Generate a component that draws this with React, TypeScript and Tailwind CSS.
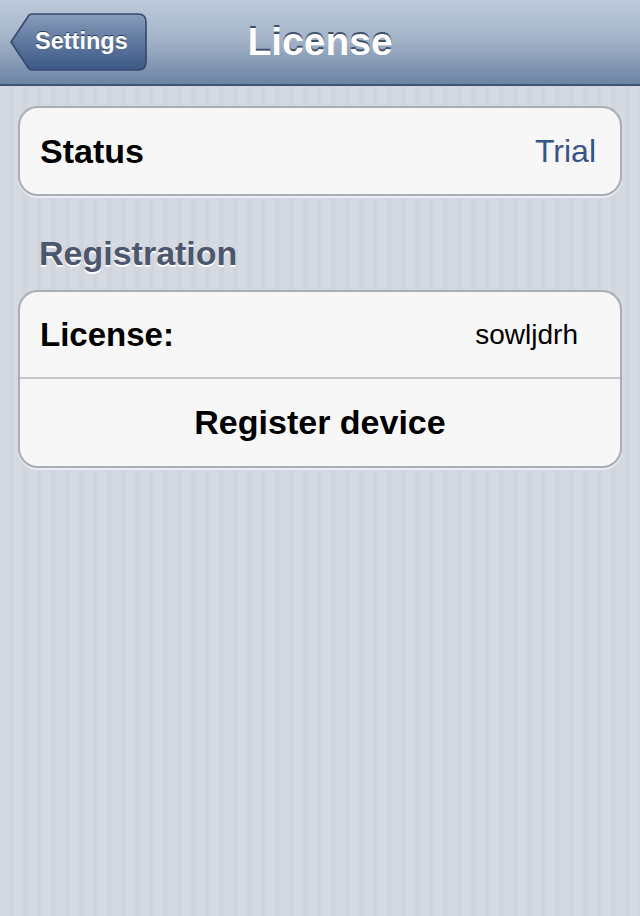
import React from "react";

const font = { fontFamily: '"Liberation Sans", Arial, sans-serif' };

export default function App() {
  return (
    <div
      className="w-[640px] h-[916px] flex flex-col overflow-hidden"
      style={font}
    >
      {/* Nav bar */}
      <div className="relative h-[86px] shrink-0 bg-[linear-gradient(to_bottom,#bccadb_0%,#a5b4c9_45%,#6c84a5_100%)] border-b-2 border-[#3f5373] flex items-center justify-center">
        <div className="absolute left-[10px] top-[13px] h-[58px] w-[137px]">
          <svg width="137" height="58" viewBox="0 0 137 58" className="absolute inset-0">
            <defs>
              <linearGradient id="bb" x1="0" y1="0" x2="0" y2="1">
                <stop offset="0" stopColor="#8a9dbb" />
                <stop offset="0.5" stopColor="#5e789f" />
                <stop offset="1" stopColor="#3b5887" />
              </linearGradient>
            </defs>
            <path
              d="M1 29 L19 2 Q20 1 23 1 L128 1 Q136 1 136 9 L136 49 Q136 57 128 57 L23 57 Q20 57 19 56 Z"
              fill="url(#bb)"
              stroke="#33486b"
              strokeWidth="1.6"
            />
          </svg>
          <span className="absolute left-[25px] top-0 h-[58px] flex items-center text-[23.5px] font-bold text-white [text-shadow:0_-1px_0_#2b3d5c]">
            Settings
          </span>
        </div>
        <span className="text-[39px] font-bold text-white leading-none [text-shadow:0_-2px_0_#3f4f6b] -mt-[1px]">
          License
        </span>
      </div>

      {/* Body */}
      <div className="flex-1 bg-[repeating-linear-gradient(to_right,#d5d9e2_0px,#d5d9e2_9px,#cfd4dd_9px,#cfd4dd_14px)] px-[18px] pt-[20px] flex flex-col">
        <div className="h-[90px] rounded-[20px] bg-[#f7f7f7] border-2 border-[#a9adb5] shadow-[0_2px_0_#e9ecf1] flex items-center justify-between pl-[20px] pr-[24px]">
          <span className="text-[34px] font-bold text-black">Status</span>
          <span className="text-[32px] text-[#385487]">Trial</span>
        </div>

        <div className="h-[94px] flex items-end pb-[17px] pl-[21px]">
          <span className="text-[34px] leading-[40px] font-bold text-[#4c566c] [text-shadow:0_2px_0_#ffffff]">
            Registration
          </span>
        </div>

        <div className="rounded-[20px] bg-[#f7f7f7] border-2 border-[#a9adb5] shadow-[0_2px_0_#e9ecf1] flex flex-col overflow-hidden">
          <div className="h-[87px] flex items-center justify-between pl-[20px] pr-[42px] border-b-2 border-[#c8c8c8]">
            <span className="text-[33px] font-bold text-black">License:</span>
            <span className="text-[28px] text-black">sowljdrh</span>
          </div>
          <div className="h-[87px] flex items-center justify-center">
            <span className="text-[34px] font-bold text-black">Register device</span>
          </div>
        </div>
      </div>
    </div>
  );
}
